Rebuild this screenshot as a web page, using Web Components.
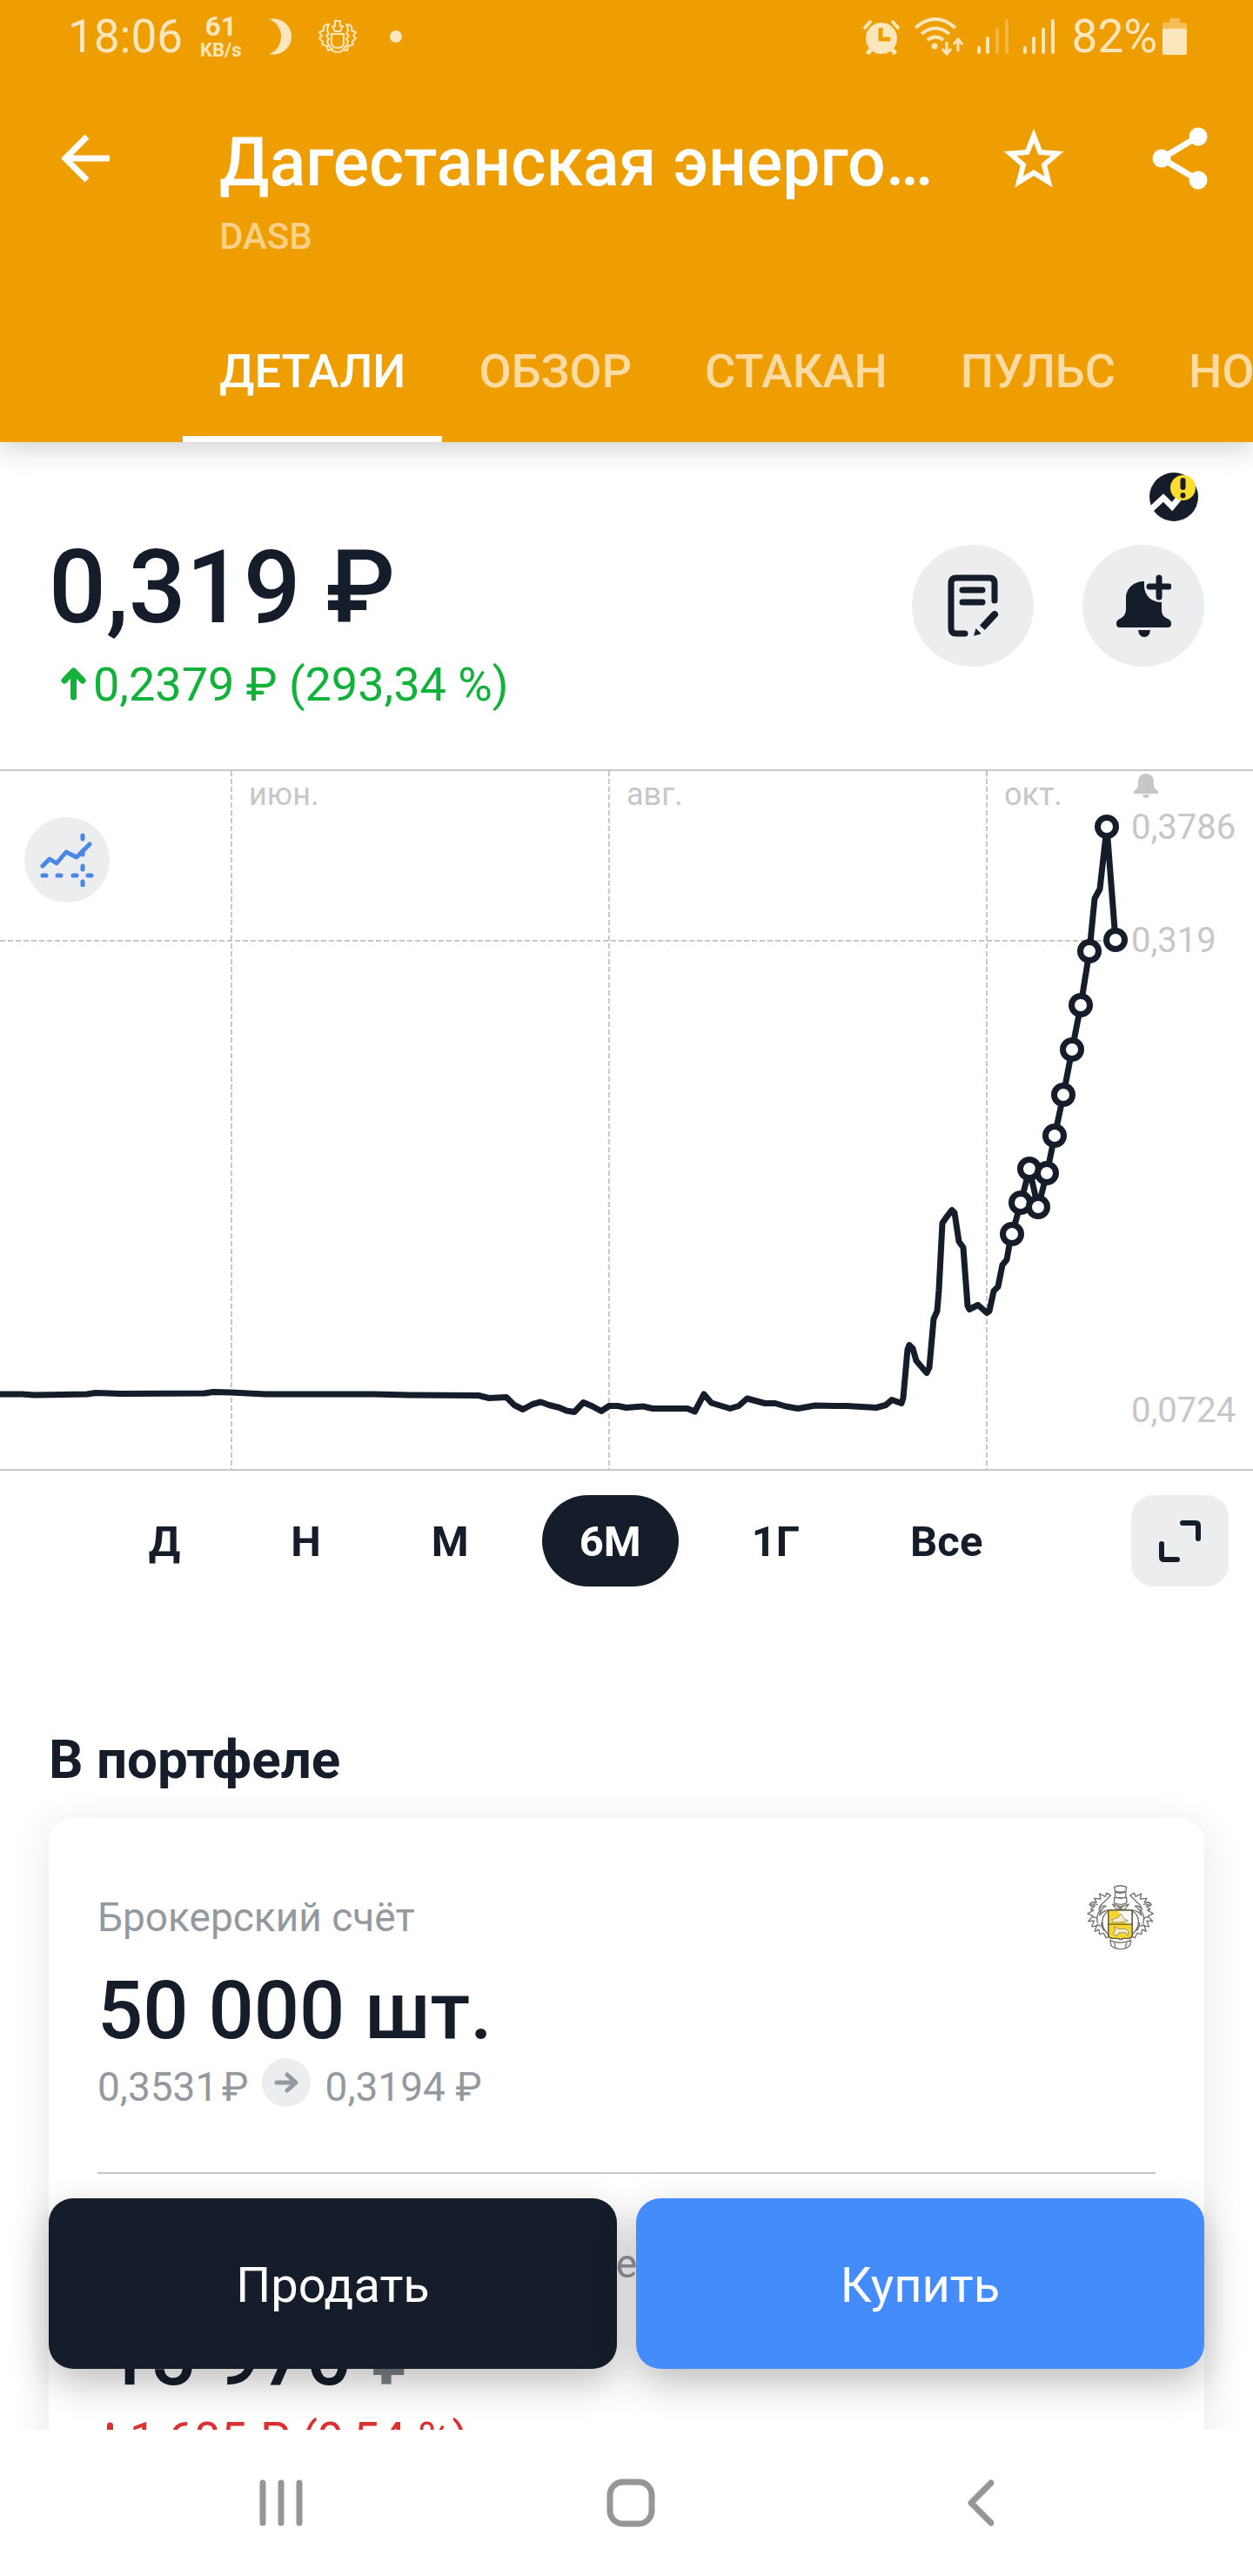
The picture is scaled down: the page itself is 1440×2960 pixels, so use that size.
<!DOCTYPE html>
<html lang="ru">
<head>
<meta charset="utf-8">
<meta name="viewport" content="width=device-width, initial-scale=1">
<title>Дагестанская энергосбытовая компания</title>
<style>
  html, body { margin: 0; height: 100%; }
  body { font-family: Roboto, "Noto Sans", sans-serif; color: #151d2b; background: #fff; }
</style>
</head>
<body>
<stock-app></stock-app>
<script>
const base = `
  :host { display: block; box-sizing: border-box; }
  *, *::before, *::after { box-sizing: border-box; }
  button { font: inherit; color: inherit; background: none; border: 0; padding: 0; margin: 0; cursor: pointer; }
  svg { display: block; flex: none; }
  h1, h2, p { margin: 0; font-weight: inherit; font-size: inherit; }
`;
function define(name, css, html) {
  const template = document.createElement('template');
  template.innerHTML = `<style>${base}${css}</style>${html}`;
  customElements.define(name, class extends HTMLElement {
    constructor() {
      super();
      this.attachShadow({ mode: 'open' }).append(template.content.cloneNode(true));
    }
  });
}

/* Phone status line: clock, traffic, notifications, radio levels, battery */
define('status-bar', `
  :host { display: flex; justify-content: space-between; align-items: center; height: 84px; padding: 0 76px 0 78px; color: #fce6be; font-size: 53px; line-height: 64px; }
  .side { display: flex; align-items: center; }
  .left { gap: 20px; }
  .rate { display: flex; flex-direction: column; align-items: center; font-weight: 700; font-size: 32px; line-height: 32px; }
  .rate small { font-weight: 700; font-size: 22px; line-height: 24px; }
  .notices { display: flex; align-items: center; gap: 30px; padding-left: 12px; }
  .notices svg:last-child { margin-left: 8px; }
  .right { gap: 15px; }
  .level { display: flex; align-items: center; gap: 6px; padding-left: 4px; }
`, `
  <div class="side left">
    <span>18:06</span>
    <span class="rate">61<small>KB/s</small></span>
    <span class="notices">
      <svg width="27" height="42" viewBox="0 0 27 42" fill="currentColor"><path d="M0 1C13-2 26 7 26 21S13 44 0 41c9-3 14-11 14-20S9 4 0 1z"/></svg>
      <svg width="44" height="40" viewBox="0 0 44 40" fill="none" stroke="currentColor" stroke-width="2" stroke-linejoin="round"><path d="M19 2h6v6h3l-3 6h-6l-3-6h3zM15 17h14v11q-1 5-7 5t-7-5zM12 6C6 6 5 10 6 13L1 15l3 4-3 3 4 4-1 3 6 2 1 5 5-1q-5-5-6-10l2-2-3-4 3-2-2-4q0-4 2-7zM32 6c6 0 7 4 6 7l5 2-3 4 3 3-4 4 1 3-6 2-1 5-5-1q5-5 6-10l-2-2 3-4-3-2 2-4q0-4-2-7zM16 36q6 4 12 0"/></svg>
      <svg width="14" height="14" viewBox="0 0 14 14" fill="currentColor"><circle cx="7" cy="7" r="7"/></svg>
    </span>
  </div>
  <div class="side right">
    <svg width="46" height="42" viewBox="0 0 46 42"><path d="M3 12L11 3M43 12l-8-9" stroke="currentColor" stroke-width="4"/><path d="M12 34l-5 7M34 34l5 7" stroke="currentColor" stroke-width="5"/><circle cx="23" cy="23" r="18" fill="currentColor"/><path d="M22 11v13h11" fill="none" stroke="#ee9e00" stroke-width="5"/></svg>
    <svg width="56" height="44" viewBox="0 0 56 44" fill="none" stroke="currentColor" stroke-width="4"><path d="M1 12Q24-8 47 12M8 19Q24 6 40 19M15 26q9-7 18 0"/><circle cx="23" cy="33" r="3.500" fill="currentColor" stroke="none"/><path d="M37 28v13m-5-5l5 6 5-6M50 39V27m-5 4l5-6 5 6" stroke-width="3"/></svg>
    <svg width="38" height="42" viewBox="0 0 38 42" stroke="currentColor" stroke-width="4" stroke-linecap="round"><path d="M3 34v5M13 23v16"/><path opacity=".35" d="M24 13v26M35 3v36"/></svg>
    <svg width="38" height="42" viewBox="0 0 38 42" stroke="currentColor" stroke-width="4" stroke-linecap="round"><path d="M3 34v5M13 23v16M24 13v26M35 3v36"/></svg>
    <span class="level"><span>82%</span>
      <svg width="28" height="42" viewBox="0 0 28 42" fill="currentColor"><path opacity=".45" d="M8 0h12v5h6q2 0 2 2v6H0V7q0-2 2-2h6z"/><path d="M0 12h28v28q0 2-2 2H2q-2 0-2-2z"/></svg>
    </span>
  </div>
`);

define('title-bar', `
  :host { display: flex; align-items: flex-start; padding: 58px 42px 0 56px; color: #fff; }
  button { width: 84px; height: 80px; display: grid; place-items: center; flex: none; }
  .name { flex: 1; min-width: 0; margin-left: 112px; white-space: nowrap; }
  h1 { font-weight: 500; font-size: 77px; line-height: 90px; }
  p { margin-top: 15px; font-weight: 500; font-size: 42px; line-height: 50px; color: #fbd08a; }
  .actions { display: flex; gap: 84px; }
`, `
  <button aria-label="Назад"><svg width="56" height="56" viewBox="0 0 56 56" fill="none" stroke="currentColor" stroke-width="7"><path d="M56 28H5M30 3L5 28l25 25"/></svg></button>
  <div class="name"><h1>Дагестанская энерго…</h1><p>DASB</p></div>
  <div class="actions">
    <button aria-label="В избранное"><svg width="70" height="68" viewBox="0 0 70 68" fill="none" stroke="currentColor" stroke-width="6"><path d="M35 8l7.500 19 19.500 1.500-15 13L52 61 35 50.500 18 61l5-19.500-15-13L27.500 27z"/></svg></button>
    <button aria-label="Поделиться"><svg width="64" height="72" viewBox="0 0 64 72" fill="currentColor"><path d="M53 11L11 36l42 25" fill="none" stroke="currentColor" stroke-width="7"/><circle cx="53" cy="11" r="10.500"/><circle cx="11" cy="36" r="10.500"/><circle cx="53" cy="61" r="10.500"/></svg></button>
  </div>
`);

define('section-tabs', `
  :host { overflow: hidden; margin-top: 48px; }
  nav { display: flex; padding-left: 210px; width: max-content; }
  a { padding: 0 42px; height: 163px; line-height: 163px; font-size: 54px; font-weight: 500; color: #fcdca4; text-decoration: none; }
  a[aria-current] { color: #fff; box-shadow: inset 0 -7px #fff; }
`, `
  <nav><a href="#details" aria-current="page">ДЕТАЛИ</a><a href="#overview">ОБЗОР</a><a href="#book">СТАКАН</a><a href="#pulse">ПУЛЬС</a><a href="#news">НОВОСТИ</a></nav>
`);

define('quote-summary', `
  :host { display: flex; justify-content: space-between; align-items: flex-start; padding: 0 56px 65px; }
  .quote { padding-top: 99px; }
  .price { font-weight: 500; font-size: 116px; line-height: 136px; }
  .change { display: flex; align-items: center; gap: 8px; margin-top: 12px; padding-left: 14px; font-size: 54px; line-height: 64px; color: #10b23a; }
  .tools { display: flex; flex-direction: column; align-items: flex-end; gap: 27px; padding-top: 35px; }
  .risk { margin-right: 7px; }
  .row { display: flex; gap: 56px; }
  button { width: 140px; height: 140px; border-radius: 50%; background: #ebedee; display: grid; place-items: center; }
`, `
  <div class="quote">
    <p class="price">0,319 ₽</p>
    <p class="change"><svg width="29" height="40" viewBox="0 0 29 40" fill="none" stroke="currentColor" stroke-width="7" stroke-linecap="round" stroke-linejoin="round"><path d="M14.500 34V5M4 15L14.500 4 25 15"/></svg><span>0,2379 ₽ (293,34 %)</span></p>
  </div>
  <div class="tools">
    <svg class="risk" width="56" height="56" viewBox="0 0 56 56"><circle cx="28" cy="28" r="28" fill="#151d2b"/><path d="M1 43L16 29l10 10 10-12" fill="none" stroke="#fff" stroke-width="7"/><circle cx="38.500" cy="17.500" r="14.500" fill="#fddc2d"/><path d="M38.500 9v8M38.500 26v.5" stroke="#151d2b" stroke-width="6" stroke-linecap="round"/></svg>
    <div class="row">
      <button aria-label="Заявка"><svg width="60" height="72" viewBox="0 0 60 72" fill="none" stroke="#151d2b" stroke-width="7" stroke-linecap="round" stroke-linejoin="round"><path d="M55 30V10q0-6-6-6H11q-6 0-6 6v52q0 6 6 6h10M18 18h23M18 32h23"/><path d="M55 46L42 60" stroke-width="8"/><path d="M33 56l12 11" stroke="#ebedee" stroke-width="3" stroke-linecap="butt"/><path d="M34 63l5 5-7 2z" stroke-width="1" fill="#151d2b"/></svg></button>
      <button aria-label="Добавить уведомление"><svg width="64" height="72" viewBox="0 0 64 72" fill="#151d2b"><path d="M33 8v5c0 11 8 19 20 19v8c0 7 3 9 7 11q4 2 4 5v1q0 4-4 4H5q-4 0-4-4v-1q0-3 4-5c4-2 7-5 7-11V27C12 16 21 8 33 8zM26 64h14q-1 8-7 8t-7-8z"/><path d="M50 4v22M39 14h22" stroke="#151d2b" stroke-width="7" stroke-linecap="round"/></svg></button>
    </div>
  </div>
`);

/* Half-year price line; the drawing scales with the window width */
const days = [[1163,534],[1173,498],[1183,459],[1193,503],[1203,464],[1212,421],[1222,374],[1232,322],[1242,271],[1252,209],[1272,66],[1282,196]];
define('price-chart', `
  :host { position: relative; }
  svg.plot { width: 100%; height: auto; font-size: 36px; fill: #c6c7c8; }
  .prices { font-size: 40px; }
  button { position: absolute; left: 28px; top: 55px; width: 98px; height: 98px; border-radius: 50%; background: #ebedee; display: grid; place-items: center; }
`, `
  <svg class="plot" viewBox="0 0 1440 806" role="img" aria-label="График цены за шесть месяцев">
    <path d="M0 1h1440M0 805h1440" stroke="#c8c8c8" stroke-width="2"/>
    <path d="M266 2v802M700 2v802M1134 2v802M0 197h1266" fill="none" stroke="#c8c8c8" stroke-width="2" stroke-dasharray="6 3"/>
    <g><text x="286" y="41">июн.</text><text x="720" y="41">авг.</text><text x="1154" y="41">окт.</text></g>
    <path d="M1303 28v-3q4-2 5-6v-4q0-10 9-10t9 10v4q1 4 5 6v3zM1313 29h8q-1 4-4 4t-4-4z"/>
    <path d="M0 718h25l15 1 60-1 10-1.500 30 1 95-.5 10-1.500 20 .5 40 2h125l40 1 80 .5 12 3 20-1 9 9 10 5 11-6 9.500-2.500 9.500 3.500 12 3 8 3.500 9 1.500 10.500-11 10.500 4.500 10 5.500 9-6h10l9.500 2 19.500-1.500 11 2.500h40l8.500 3.500 10.500-20 8.500 10 21.500 6.500 10-3 9.500-8.500 20.500 5.500h12l12 3.500 14 2.500 20-3.500 23 .5h13l34 2 11-3 7-6 11 4 2-6 5-56 2-5 4 4 4 14 5 6 7 8 3-6 5-56 4-9 2-24 4-77 4-6 7-9 3 3 5 33 5 7 5 67 2 4 10-5 10 9 3-2 5-23 5-5 5-25 5-6 3-17 3-12 10-36 10-39 10 44 10-39 9-43 10-47 10-52 10-51 10-62 6-61 6-11 8-71 10 130" fill="none" stroke="#151d2b" stroke-width="7" stroke-linejoin="round"/>
    <g fill="#fff" stroke="#151d2b" stroke-width="7">${days.map(([x, y]) => `<circle cx="${x}" cy="${y}" r="10.500"/>`).join('')}</g>
    <g class="prices"><text x="1300" y="80">0,3786</text><text x="1300" y="210">0,319</text><text x="1300" y="750">0,0724</text></g>
  </svg>
  <button aria-label="Индикаторы"><svg width="62" height="62" viewBox="0 0 62 62" fill="none" stroke="#4a86e8" stroke-width="5" stroke-linecap="round" stroke-linejoin="round"><path d="M3 38l8-8 8 5 11-13 12 6 15-15" /><path d="M3 49h4M20 49h4M38 49h4M55 49h4M49 3v4M49 21v4M49 38v4M49 56v4"/></svg></button>
`);

define('period-picker', `
  :host { display: flex; align-items: center; padding: 28px 28px 0 0; }
  .periods { flex: 1; display: flex; justify-content: center; gap: 41px; }
  .periods button { height: 105px; padding: 2px 43px 0; border-radius: 53px; font-size: 49px; font-weight: 700; }
  .periods button[aria-pressed=true] { background: #151d2b; color: #fff; }
  .expand { width: 112px; height: 105px; border-radius: 26px; background: #ebedee; display: grid; place-items: center; }
`, `
  <div class="periods"><button>Д</button><button>Н</button><button>М</button><button aria-pressed="true">6М</button><button>1Г</button><button>Все</button></div>
  <button class="expand" aria-label="На весь экран"><svg width="50" height="50" viewBox="0 0 50 50" fill="none" stroke="#151d2b" stroke-width="6" stroke-linecap="round"><path d="M28 4h15q3 0 3 3v15M4 28v15q0 3 3 3h15"/></svg></button>
`);

define('bank-crest', `:host { display: block; }`, `
  <svg width="80" height="76" viewBox="50 46 236 220" fill="none" stroke="#77726d" stroke-width="4" stroke-linejoin="round">
    <path d="M146 54q21-10 42 0l-3 14q-18 6-36 0zM149 70q18 8 36 0v18q-18 8-36 0zM146 90h42v18q-21 10-42 0zM140 112l27 8 28-8-14 18h-27z"/>
    <path d="M166 118v22M156 116l10 16 11-16"/>
    <path d="M134 82l-14-8-4 12-20-10 4 18-22-2 8 14q-18-4-24 8l18 4-14 12 10 2-20 12 18 8-16 18 20-2-8 20 16-2-6 18 14-6 2 16 14-4 8 16 16-6q-30-20-28-52 2-26 26-36-24 0-36 18 4-22 22-32-14-4-24 12 4-16 14-22zM66 122q8-16 24-8M72 156q12-2 18 8M82 186q10-8 18 2M100 130q-18 20-10 48M112 202q-10-12-10-28"/>
    <path d="M200 82l14-8 4 12 20-10-4 18 22-2-8 14q18-4 24 8l-18 4 14 12-10 2 20 12-18 8 16 18-20-2 8 20-16-2 6 18-14-6-2 16-14-4-8 16-16-6q30-20 28-52-2-26-26-36 24 0 36 18-4-22-22-32 14-4 24 12-4-16-14-22zM268 122q-8-16-24-8M262 156q-12-2-18 8M252 186q-10-8-18 2M234 130q18 20 10 48M222 202q10-12 10-28"/>
    <path d="M126 132h81v82q0 12-12 14h-20l-8 4-8-4h-20q-13-2-13-14z" fill="#fff"/>
    <path d="M128 134h30l32 44h15v36q0 10-11 12h-55q-11-2-11-12z" fill="#f6d52c" stroke="none"/>
    <path d="M126 132h81v82q0 12-12 14h-20l-8 4-8-4h-20q-13-2-13-14zM126 180h81" stroke="#625829"/>
    <path d="M138 164l20-6 12-14 8 16 16 8-20 4-32 2zM142 214l8-14-4-12 14 8h24l10 8-2 14-8-10h-22l-6 10z" fill="#f5efd0" stroke-width="2"/>
    <path d="M132 234q14 8 35 8t36-8l-4 18q-12 12-32 12t-32-12zM146 242l4 16M188 242l-4 16"/>
  </svg>
`);

define('portfolio-card', `
  :host { padding: 76px 56px 56px; border-radius: 28px; background: #fff; box-shadow: 0 8px 48px rgba(0, 0, 0, .1); }
  .account { display: flex; justify-content: space-between; align-items: center; }
  .muted { font-size: 46px; line-height: 54px; color: #9499a0; }
  .big { font-weight: 500; font-size: 92px; line-height: 108px; }
  .amount { margin-top: 16px; }
  .prices { display: flex; align-items: flex-end; height: 60px; }
  .prices svg { align-self: flex-start; margin: 0 17px 0 15px; }
  hr { margin: 71px 0 76px; border: 0; border-top: 2px solid #c6c8ca; }
  .note { text-align: center; }
  .total { margin-top: 27px; padding-left: 8px; }
  .total span { color: #7b8086; }
  .loss { display: flex; align-items: center; gap: 8px; margin-top: 8px; font-size: 54px; line-height: 64px; color: #dc2f2f; }
`, `
  <div class="account"><p class="muted">Брокерский счёт</p><bank-crest></bank-crest></div>
  <p class="big amount">50 000 шт.</p>
  <div class="prices muted"><span>0,3531&#8202;₽</span>
    <svg width="56" height="56" viewBox="0 0 56 56"><circle cx="28" cy="28" r="28" fill="#ebedee"/><path d="M17 28h21M29 19l10 9-10 9" fill="none" stroke="#9499a0" stroke-width="5" stroke-linecap="round" stroke-linejoin="round"/></svg>
    <span>0,3194 ₽</span></div>
  <hr>
  <p class="muted note">е</p>
  <p class="big total">15 970 <span>₽</span></p>
  <p class="loss"><svg width="29" height="40" viewBox="0 0 29 40" fill="none" stroke="currentColor" stroke-width="7" stroke-linecap="round" stroke-linejoin="round"><path d="M14.500 4v30M4 25l10.500 11L25 25"/></svg><span>1 685 ₽ (9,54 %)</span></p>
`);

define('trade-actions', `
  :host { position: absolute; left: 56px; right: 56px; bottom: 70px; display: flex; gap: 22px; }
  button { flex: 1; height: 196px; padding-top: 3px; border-radius: 28px; font-size: 56px; color: #fff; box-shadow: 0 16px 44px rgba(0, 0, 0, .26); }
  .sell { background: #151d2b; }
  .buy { background: #448bfb; }
`, `<button class="sell">Продать</button><button class="buy">Купить</button>`);

define('system-nav', `
  :host { display: grid; grid-template-columns: repeat(3, 1fr); height: 168px; padding: 0 112px 0 122px; background: #fff; }
  button { display: grid; place-items: center; }
  svg { fill: none; stroke: #969696; stroke-width: 7; stroke-linecap: round; stroke-linejoin: round; }
`, `
  <button aria-label="Недавние"><svg width="50" height="54" viewBox="0 0 50 54"><path d="M4 4v46M25 4v46M46 4v46"/></svg></button>
  <button aria-label="Домой"><svg width="56" height="56" viewBox="0 0 56 56"><rect x="4" y="4" width="48" height="48" rx="15"/></svg></button>
  <button aria-label="Назад"><svg width="30" height="54" viewBox="0 0 30 54"><path d="M27 4L4 27l23 23"/></svg></button>
`);

define('stock-app', `
  :host { display: flex; flex-direction: column; height: 100vh; }
  header { position: relative; z-index: 1; background: #ee9e00; box-shadow: 0 8px 30px rgba(0, 0, 0, .18); }
  .body { position: relative; flex: 1; min-height: 0; overflow: hidden; }
  main { height: 100%; overflow-y: auto; scrollbar-width: none; }
  h2 { margin: 163px 56px 31px; font-weight: 700; font-size: 62px; line-height: 72px; }
  portfolio-card { margin: 0 56px 260px; }
`, `
  <header><status-bar></status-bar><title-bar></title-bar><section-tabs></section-tabs></header>
  <div class="body">
    <main>
      <quote-summary></quote-summary>
      <price-chart></price-chart>
      <period-picker></period-picker>
      <h2>В портфеле</h2>
      <portfolio-card></portfolio-card>
    </main>
    <trade-actions></trade-actions>
  </div>
  <system-nav></system-nav>
`);
</script>
</body>
</html>
